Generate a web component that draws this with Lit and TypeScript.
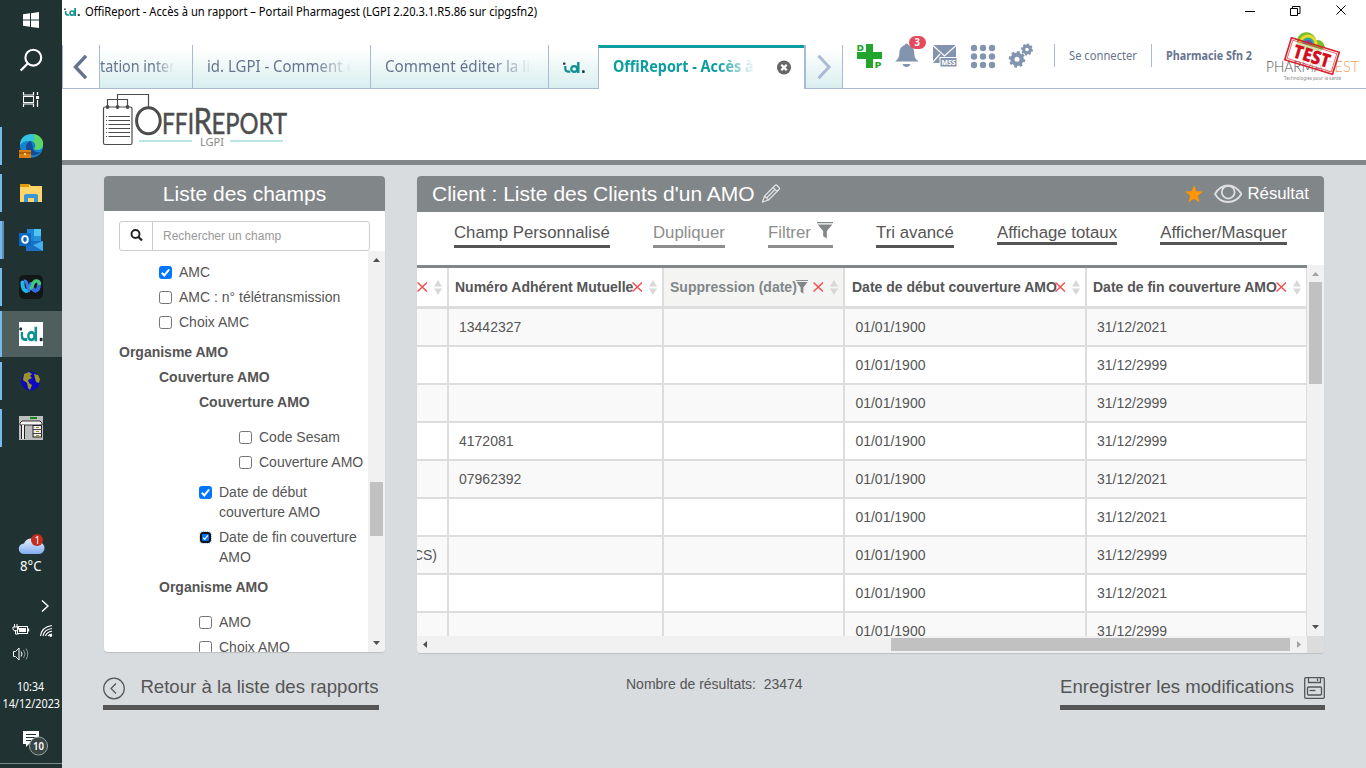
import { LitElement, html, svg, css, nothing } from "lit";
import { customElement, property } from "lit/decorators.js";
import { classMap } from "lit/directives/class-map.js";

const UI = "'Noto Sans', 'Open Sans', sans-serif";

/* One line of text held to a given width. */
const line = (text: string, width: number, size: number, color: string, weight = 400, family = UI) => html`
  <svg width=${width} height=${Math.round(size * 1.5)} style="display:block;flex:none;overflow:visible">
    <text x="0" y=${Math.round(size * 1.1)} font-family=${family} font-size=${size} font-weight=${weight}
      fill=${color} textLength=${width} lengthAdjust="spacingAndGlyphs">${text}</text>
  </svg>`;

/* The "id." mark, 22 by 11. */
const idGlyph = (dot = "#1d3b44") => svg`
  <rect x="0" y=".6" width="2.4" height="2.2" rx=".6" fill=${dot}/>
  <path d="M2.300 4v2.600q0 3 2.600 3h2.500" fill="none" stroke="#0f9192" stroke-width="2.200"/>
  <circle cx="11.200" cy="7" r="2.900" fill="none" stroke="#0f9192" stroke-width="2.200"/>
  <path d="M15.300 0v11" stroke="#0f9192" stroke-width="2.400"/>
  <rect x="19" y="8.300" width="2.700" height="2.700" rx=".8" fill=${dot}/>`;

const gear = (cx: number, cy: number, r: number, teeth: number) => svg`
  <g transform="translate(${cx} ${cy})" fill="#8294ae">
    ${Array.from({ length: teeth }, (_, i) => svg`<rect x=${-r * 0.2} y=${-r * 1.25} width=${r * 0.44} height=${r * 0.6} transform="rotate(${(i * 360) / teeth + 10})"/>`)}
    <circle r=${r * 0.7} fill="none" stroke="#8294ae" stroke-width=${r * 0.64}/>
  </g>`;

const funnel = (w: number, h: number, color: string) => html`
  <svg class="funnel" width=${w} height=${h} viewBox="0 0 14 17" preserveAspectRatio="none">
    <path d="M0 .6h14" stroke=${color} stroke-width="1.1"/><path d="M.6 2.4h12.8L8.6 9v7.6L5.4 14.2V9z" fill=${color}/>
  </svg>`;

@customElement("scroll-bar")
class ScrollBar extends LitElement {
  @property({ type: Boolean, reflect: true }) horizontal = false;
  @property({ type: Number }) before = 0;
  @property({ type: Number }) thumb = 0;
  @property() startColor = "#505050";
  @property() endColor = "#505050";
  static styles = css`
    :host { display: flex; flex-direction: column; width: 17px; background: #f1f1f1; flex: none; }
    :host([horizontal]) { flex-direction: row; width: auto; height: 17px; }
    .btn { width: 17px; height: 17px; flex: none; display: block; }
    .thumb { background: #c1c1c1; flex: none; margin: 0 2px; }
    :host([horizontal]) .thumb { margin: 2px 0; }
    .space { flex: none; }
    .rest { flex: 1; }
  `;
  render() {
    const d = this.horizontal ? "width" : "height";
    const a = this.horizontal ? "M10 5v7l-4-3.5z" : "M5 11h7l-3.5-4z";
    const b = this.horizontal ? "M7 5v7l4-3.5z" : "M5 6h7l-3.5 4z";
    return html`
      <svg class="btn"><path d=${a} fill=${this.startColor}/></svg>
      <div class="space" style="${d}:${this.before}px"></div>
      <div class="thumb" style="${d}:${this.thumb}px"></div>
      <div class="rest"></div>
      <svg class="btn"><path d=${b} fill=${this.endColor}/></svg>`;
  }
}

@customElement("task-bar")
class TaskBar extends LitElement {
  static styles = css`
    :host { display: flex; flex-direction: column; width: 62px; height: 768px; background: #203332; flex: none; }
    svg { display: block; overflow: visible; }
    .top { height: 40px; display: flex; align-items: center; justify-content: center; }
    .apps { margin-top: 3px; }
    .app { height: 47px; display: flex; align-items: flex-start; }
    .mark { width: 2px; height: 38px; margin-top: 4px; background: #76b9ed; }
    .app svg { margin: 11px 0 0 17px; }
    .active { background: #4f5f5e; height: 46px; margin-bottom: 1px; }
    .active .mark { height: 46px; margin-top: 0; }
    .stack .mark { border-right: 2px solid #5b8fb8; }
    .stack svg { margin-left: 15px; }
    .tray { margin-top: 80px; }
  `;
  render() {
    const apps = [
      { c: "", g: svg`<circle cx="12.5" cy="12" r="11.6" fill="#1683d0"/><path d="M1 11C1-3 23-4 24 11c0 5-5 6-9 4 3-3 2-7-3-8-5-.6-9 1-11 4z" fill="#35c1e0"/><path d="M14 0c8 1 11 7 10 11-1 5-6 5-9 4 3-3 1-7-2-8 4-1 3-4 1-7z" fill="#5fd663"/><path d="M12 7c-6 1-7 9-1 13 4 3 9 0 11-2-5 1-9-1-8-5z" fill="#144b96"/><rect x="0" y="16" width="12" height="8" fill="#d98213"/><path d="M0 19h12" stroke="#a14f06" stroke-width="1.4"/><rect x="5" y="19" width="2" height="2" fill="#ffd94a"/>` },
      { c: "", g: svg`<path d="M1 3h9l2 2h11v16H1z" fill="#ffd667"/><path d="M1 3h9v3H1z" fill="#e39a0b"/><path d="M5 21v-6q0-2 2-2h10q2 0 2 2v6h-4v-4H9v4z" fill="#3996dc"/>` },
      { c: "stack", g: svg`<rect x="8" y="1" width="14" height="14" fill="#1e86d8"/><path d="M15 1h7v7h-7z" fill="#52c3f7"/><path d="M15 8h7v6h-7z" fill="#2292df"/><path d="M7 13h17v10H7z" fill="#1a71c4"/><path d="M24 13v10L14 17z" fill="#45aef0"/><rect y="5" width="12" height="13" fill="#0b69c2"/><ellipse cx="6" cy="11.5" rx="2.8" ry="3.4" fill="none" stroke="#fff" stroke-width="1.9"/>` },
      { c: "", g: svg`<rect width="24" height="24" rx="5" fill="#121718"/><path d="M3.500 7.500c0 9 5 12 8.500 3" fill="none" stroke="#20b8e8" stroke-width="4" stroke-linecap="round"/><path d="M12 9c2 10 8 8 8-1" fill="none" stroke="#356de2" stroke-width="4" stroke-linecap="round"/><path d="M12 13c2-1 1-8 6-7 1.500 0 2 1 2.500 2.500" fill="none" stroke="#42c77b" stroke-width="3.400" stroke-linecap="round"/><path d="M5 6c4-1 3 9 6 10" fill="none" stroke="#3b7af1" stroke-width="3"/>` },
      { c: "active", g: svg`<rect width="24" height="24" fill="#fff"/><g transform="translate(.4 4.800) scale(1.070 1.320)">${idGlyph("#1b2a33")}</g>` },
      { c: "", g: svg`<circle cx="11.5" cy="12" r="9.6" fill="#0b0bc4"/><path d="M5 5l5-2 3 2-2 2 2 2-4 2 1 3 3 2-2 5-2-2-1-5-4-3z M15 5l4 1 2 4-1 4-3-1-1-4z" fill="#9b9520"/>` },
      { c: "", g: svg`<rect width="24" height="24" fill="#bdbdbd"/><rect x="11" y="1" width="7" height="2" fill="#0e8a1d"/><path d="M1 7l2-2h18l2 2v2H1z" fill="#f4f4f4" stroke="#222" stroke-width=".9"/><path d="M2.500 9v14M5.500 9v14" stroke="#222"/><path d="M4 9v14" stroke="#eee" stroke-width="2"/><rect x="14" y="9.500" width="8.500" height="11.500" fill="#eee" stroke="#222"/><path d="M14 13.500h9M14 17.500h9" stroke="#444"/><path d="M17 11.500h3M17 15.500h3M17 19.500h3" stroke="#998b13" stroke-width="1.2"/>` },
    ];
    return html`
      <div class="top"><svg width="16" height="16"><path d="M0 2.300L7 1.300V7.500H0zM8 1.200L16 0v7.500H8zM0 8.500h7v6.300L0 13.800zM8 8.500h8V16l-8-1.100z" fill="#fff"/></svg></div>
      <div class="top"><svg width="22" height="22"><circle cx="13.300" cy="8.700" r="7.900" fill="none" stroke="#fff" stroke-width="2.100"/><path d="M7.700 14.500L.7 21.500" stroke="#fff" stroke-width="2.400"/></svg></div>
      <div class="top"><svg width="16" height="16"><path d="M.5 0v3h10V0M.5 15v-3h10v3M14.500 0v3M14.500 8v7" fill="none" stroke="#fff" stroke-width="1.200"/><rect x=".5" y="4.500" width="10" height="6" fill="none" stroke="#fff"/><rect x="13" y="4" width="3" height="3" fill="#fff"/></svg></div>
      <div class="apps">${apps.map((a) => html`<div class="app ${a.c}"><i class="mark"></i><svg width="24" height="24">${a.g}</svg></div>`)}</div>
      <div class="tray">
        <svg width="62" height="236" viewBox="0 532 62 236" font-family=${UI} fill="#fff">
          <defs><linearGradient id="cl" x2="0" y2="1"><stop stop-color="#e5efff"/><stop offset="1" stop-color="#80aef0"/></linearGradient></defs>
          <path d="M24 554a5 5 0 0 1 0-10.500 8 8 0 0 1 14-1.500 6 6 0 0 1 1 12z" fill="url(#cl)"/>
          <circle cx="37" cy="540" r="6" fill="#c52b1e"/><text x="34.500" y="544" font-size="10">1</text>
          <text x="20" y="571" font-size="13.500" textLength="21.500" lengthAdjust="spacingAndGlyphs">8°C</text>
          <path d="M42 600.500l6 5.500-6 5.500" fill="none" stroke="#fff" stroke-width="1.400"/>
          <rect x="17.500" y="626.500" width="10" height="7" fill="none" stroke="#fff"/><rect x="19" y="628" width="7" height="4"/><rect x="28" y="628.500" width="1.200" height="3"/>
          <path d="M14.500 624v3M17 624v3M13 627h5.500v2q-1 2-3 2t-2.500-2zM15.500 630v4h3" fill="none" stroke="#fff"/>
          <g fill="none" stroke="#fff" stroke-width="1.100"><path d="M40.500 636q1-9 11.500-10.500"/><path d="M43 636q1-6.500 9-7.500"/><path d="M45.500 636q1-4 6.500-4.700"/><path d="M48 636q.7-1.500 4-2"/></g><circle cx="50.700" cy="635.500" r="1.400"/>
          <path d="M13.500 651.500h2l3.500-3.500v12l-3.500-3.500h-2z" fill="none" stroke="#fff"/><path d="M21 651.500q2 2.500 0 5" fill="none" stroke="#fff"/><path d="M23.500 650q3 4 0 8M26 648.500q3.500 5.500 0 11" fill="none" stroke="#8a9897"/>
          <text x="17" y="690.700" font-size="12" textLength="27" lengthAdjust="spacingAndGlyphs">10:34</text>
          <text x="2.500" y="707.700" font-size="12" textLength="57.500" lengthAdjust="spacingAndGlyphs">14/12/2023</text>
          <path d="M23 731h16v13H29l-3 3v-3h-3z"/><path d="M26 734.500h10M26 737.500h10M26 740.500h6" stroke="#203332" stroke-width="1.100"/>
          <circle cx="38.500" cy="746" r="9" fill="#3a4544" stroke="#9aa3a2"/><text x="33" y="750" font-size="11" font-weight="600" textLength="11" lengthAdjust="spacingAndGlyphs">10</text>
          <path d="M0 763.500h62" stroke="#7e8a89"/>
        </svg>
      </div>`;
  }
}

@customElement("portal-header")
class PortalHeader extends LitElement {
  static styles = css`
    :host { display: block; background: #fff; }
    svg { display: block; }
    .title { height: 24px; display: flex; align-items: flex-start; padding-left: 2px; }
    .title .name { margin: 3px 0 0 5px; }
    .title .mark { margin-top: 8px; }
    .spacer { flex: 1; }
    .bar { margin-top: 21px; height: 44px; display: flex; box-shadow: inset 0 -1px #a9b9d6; box-sizing: border-box; }
    .tab { box-sizing: border-box; height: 43px; border-left: 1px solid #a9b9d6; background: linear-gradient(#fff 10%, #d9eeee); display: flex; align-items: center; flex: none; overflow: hidden; }
    .plain { background: #fff; }
    .arrow { width: 37px; justify-content: center; }
    .arrow svg { margin-right: 1px; }
    .fade { -webkit-mask-image: linear-gradient(90deg, #000 72%, transparent 98%); mask-image: linear-gradient(90deg, #000 72%, transparent 98%); overflow: hidden; flex: none; margin-bottom: 2px; }
    .t1 { width: 93px; } .t1 .fade { width: 76px; }
    .t2 { width: 178px; padding-left: 14px; } .t2 .fade { width: 148px; }
    .t3 { width: 178px; padding-left: 14px; } .t3 .fade { width: 150px; }
    .t4 { width: 50px; padding: 2px 0 0 14px; }
    .t5 { width: 206px; height: 44px; background: #fff; border-top: 3px solid #0c9e9f; padding: 0 0 2px 14px; }
    .t5 .fade { width: 146px; margin: 0 18px 3px 0; }
    .t6 { width: 39px; border-left-width: 2px; border-right: 1px solid #a9b9d6; justify-content: center; }
    .icons { margin-left: 14px; flex: none; }
    .sep { width: 1px; height: 23px; background: #a9b9d6; margin-top: -1px; }
    .right { display: flex; align-items: center; padding-bottom: 23px; }
    .right .who { margin-left: 14px; margin-right: 14px; }
    .brand { margin-left: -2px; flex: none; }
    .logo { height: 71px; border-bottom: 5px solid #818689; padding-left: 40px; }
  `;
  render() {
    const c = "#66758f";
    return html`
      <div class="title">
        <svg class="mark" width="16" height="8" viewBox="0 0 22 11">${idGlyph()}</svg>
        <div class="name">${line("OffiReport - Accès à un rapport – Portail Pharmagest (LGPI 2.20.3.1.R5.86 sur cipgsfn2)", 452, 12, "#000")}</div>
        <div class="spacer"></div>
        <svg width="121" height="24" fill="none" stroke="#000"><path d="M0 11.500h10M45.500 8.500h7v7h-7zM47.500 8.500v-2h7.500v7h-2.500M91.500 5.500l9 9m0-9l-9 9"/></svg>
      </div>
      <div class="bar">
        <div class="tab plain arrow"><svg width="15" height="24"><path d="M13 .8L2.500 12 13 23.200" fill="none" stroke=${c} stroke-width="3.400"/></svg></div>
        <div class="tab t1"><div class="fade">${line("tation interne", 92, 16, c)}</div></div>
        <div class="tab t2"><div class="fade">${line("id. LGPI - Comment é", 148, 16, c)}</div></div>
        <div class="tab t3"><div class="fade">${line("Comment éditer la list", 158, 16, c)}</div></div>
        <div class="tab t4"><svg width="22" height="11">${idGlyph()}</svg></div>
        <div class="tab t5"><div class="fade">${line("OffiReport - Accès à un", 163, 16, "#0c9e9f", 700)}</div>
          <svg width="15" height="15"><circle cx="7" cy="7.500" r="7" fill="#666"/><path d="M4.300 4.800l5.400 5.400m0-5.400l-5.400 5.400" stroke="#fff" stroke-width="2.300"/></svg></div>
        <div class="tab t6"><svg width="15" height="24"><path d="M1.500 .8L12 12 1.500 23.200" fill="none" stroke="#a9b9d6" stroke-width="3"/></svg></div>
        <svg class="icons" width="197" height="43" viewBox="857 45 197 43" overflow="visible" font-family=${UI} font-weight="800">
          <path d="M866 44h7v8h9v7h-9v9h-7v-9h-9v-7h9z" fill="#22a52b"/>
          <path d="M856 43.500h9v7.500h-9zM873.500 60.500h8.500v8h-8.500z" fill="#fff"/>
          <text x="856.500" y="50.500" font-size="9" fill="#22a52b" textLength="7.500" lengthAdjust="spacingAndGlyphs">D</text>
          <text x="874.500" y="68" font-size="9" fill="#22a52b" textLength="7" lengthAdjust="spacingAndGlyphs">P</text>
          <path d="M906.500 43.500q1.800 0 1.800 1.500 6 1.500 6 9 0 5 4.500 7.500h-24q4.500-2.500 4.500-7.500 0-7.500 5.500-9 0-1.500 1.700-1.500zM902.500 64h8q-1 3-4 3t-4-3z" fill="#8294ae"/>
          <rect x="909" y="36" width="17" height="13" rx="6.500" fill="#e8485c"/><text x="914.600" y="46" font-size="10" fill="#fff" font-weight="700" textLength="5.500" lengthAdjust="spacingAndGlyphs">3</text>
          <rect x="933" y="45" width="23" height="18" fill="#8294ae"/><path d="M933 45.500l11.500 10.500L956 45.500M933 62l7-8" fill="none" stroke="#fff" stroke-width="1.200"/>
          <rect x="940" y="57.500" width="17" height="9.500" fill="#8294ae" stroke="#fff"/><text x="941.500" y="65.300" font-size="7.500" fill="#fff" textLength="14" lengthAdjust="spacingAndGlyphs">MSS</text>
          ${[0, 1, 2].map((r) => [0, 1, 2].map((k) => svg`<circle cx=${974 + k * 9} cy=${48 + r * 8.5} r="3.200" fill="#8294ae"/>`))}
          ${gear(1017, 59.3, 6.6, 8)}${gear(1027, 49.5, 4.8, 8)}
        </svg>
        <div class="right">
          <i class="sep"></i><div class="who">${line("Se connecter", 68, 12, c)}</div>
          <i class="sep"></i><div class="who">${line("Pharmacie Sfn 2", 86, 12, c, 700)}</div>
        </div>
        <svg class="brand" width="100" height="40" viewBox="1264 45 100 40" overflow="visible">
          <path d="M1298 47a9.500 9.500 0 0 1 17-10l1 3q7-1 9 7l-4 4-23-2z" fill="#76bd2b"/>
          <path d="M1300 43a8 8 0 0 1 16 2" fill="none" stroke="#e8d92b" stroke-width="3"/><path d="M1303 43a5 5 0 0 1 10 2" fill="#6857a5" stroke="#28a5b5" stroke-width="2"/>
          <text x="1266" y="71.500" font-family="Lato, sans-serif" font-weight="300" font-size="16" fill="#555" textLength="57" lengthAdjust="spacingAndGlyphs">PHARMA</text>
          <text x="1324" y="71.500" font-family="Lato, sans-serif" font-weight="300" font-size="16" fill="#f0a060" textLength="35" lengthAdjust="spacingAndGlyphs">GEST</text>
          <text x="1284" y="80" font-family=${UI} font-size="5.500" fill="#888" textLength="57" lengthAdjust="spacingAndGlyphs">Technologies pour la santé</text>
          <g transform="rotate(17 1312 56)"><rect x="1287" y="44.500" width="50" height="23" fill="none" stroke="#dc1f2d" stroke-width="1.600"/><rect x="1289" y="46.500" width="46" height="19" fill="#ffffff99" stroke="#dc1f2d" stroke-width=".6"/>
          <text x="1293" y="62.800" font-family=${UI} font-weight="900" font-size="19" fill="#d3101f" textLength="38" lengthAdjust="spacingAndGlyphs">TEST</text></g>
        </svg>
      </div>
      <div class="logo">
        <svg width="190" height="71" viewBox="102 89 190 71" font-family="Lato, sans-serif" fill="#4d4d4d">
          <g fill="none" stroke="#4d4d4d" stroke-width="1.200"><rect x="103.500" y="107" width="28.500" height="37.500" rx="1.500"/>
          <path d="M107.500 107v-7.500h20v7.500M117.500 107V94.500h31V107"/>
          <path d="M106 116.500h24M106 120.500h24M106 124.500h24M106 128.500h24M106 132.500h24M106 136.500h24" stroke-dasharray="1 1.500 22"/></g>
          <circle cx="107.500" cy="107" r="1.900"/><circle cx="117.500" cy="107" r="1.900"/><circle cx="127.500" cy="107" r="1.900"/>
          <ellipse cx="148.400" cy="120.700" rx="11.800" ry="13" fill="none" stroke="#4d4d4d" stroke-width="3"/>
          <g stroke="#4d4d4d" stroke-width=".5">
          <text x="162" y="134" font-size="29.500" textLength="32" lengthAdjust="spacingAndGlyphs">FFI</text>
          <text x="193.500" y="134" font-size="37.500" textLength="18.500" lengthAdjust="spacingAndGlyphs">R</text>
          <text x="211.500" y="134" font-size="29.500" textLength="75.500" lengthAdjust="spacingAndGlyphs">EPORT</text></g>
          <path d="M139 141h53M230 141h53" stroke="#b9e5e2" stroke-width="2"/>
          <text x="200" y="145.800" font-family=${UI} font-size="11" fill="#888" textLength="24" lengthAdjust="spacingAndGlyphs">LGPI</text>
        </svg>
      </div>`;
  }
}

type Field = { t: string; i: number; g?: number; on?: boolean; head?: boolean; focus?: boolean };

@customElement("field-list")
class FieldList extends LitElement {
  static styles = css`
    :host { display: flex; flex-direction: column; width: 281px; height: 476px; background: #fff; border-radius: 4px; overflow: hidden; box-shadow: 0 1px 1px #0002; color: #555; font: 14px/20px "Liberation Sans", Arial, sans-serif; }
    .head { height: 35px; background: #818689; color: #fff; font-size: 21px; line-height: 36px; text-align: center; flex: none; }
    .search { margin: 10px 15px 0; height: 30px; box-sizing: border-box; border: 1px solid #ccc; border-radius: 3px; display: flex; flex: none; font-size: 12px; line-height: 28px; color: #999; }
    .search svg { width: 32px; border-right: 1px solid #ccc; }
    .search span { padding-left: 10px; }
    .body { flex: 1; min-height: 0; display: flex; }
    .list { flex: 1; overflow: hidden; padding-top: 11px; }
    .item { display: flex; width: max-content; }
    .item b { white-space: nowrap; }
    .text { white-space: pre; }
    .box { width: 13px; height: 13px; margin: 4px 7px 0 0; box-sizing: border-box; border: 1px solid #767676; border-radius: 2.500px; background: #fff; flex: none; }
    .on { background: #0075ff; border-color: #0075ff; }
    .focus { border: 2px solid #101010; border-radius: 3px; width: 11px; height: 11px; margin: 5px 8px 0 1px; outline: 1px dotted #9fc4f0; }
    .box svg { display: block; width: 100%; height: 100%; }
  `;
  private items: Field[] = [
    { t: "AMC", i: 55, g: 0, on: true },
    { t: "AMC : n° télétransmission", i: 55 },
    { t: "Choix AMC", i: 55 },
    { t: "Organisme AMO", i: 15, g: 10, head: true },
    { t: "Couverture AMO", i: 55, head: true },
    { t: "Couverture AMO", i: 95, head: true },
    { t: "Code Sesam", i: 135, g: 15 },
    { t: "Couverture AMO", i: 135 },
    { t: "Date de début\ncouverture AMO", i: 95, g: 10, on: true },
    { t: "Date de fin couverture\nAMO", i: 95, on: true, focus: true },
    { t: "Organisme AMO", i: 55, g: 10, head: true },
    { t: "AMO", i: 95, g: 15 },
    { t: "Choix AMO", i: 95 },
  ];
  render() {
    return html`
      <div class="head">Liste des champs</div>
      <div class="search"><svg height="28"><circle cx="15.500" cy="12" r="4" fill="none" stroke="#222" stroke-width="1.900"/><path d="M18.500 15l3.500 3.500" stroke="#222" stroke-width="2.300"/></svg><span>Rechercher un champ</span></div>
      <div class="body">
        <div class="list">${this.items.map((f) => html`
          <div class="item" style="padding-left:${f.i}px;margin-top:${f.g ?? 5}px">
            ${f.head ? html`<b>${f.t}</b>` : html`<i class=${classMap({ box: true, on: !!f.on, focus: !!f.focus })}>
              ${f.on ? html`<svg viewBox="0 0 11 11"><path d="M1.800 5.800l2.500 2.600L9.200 2.300" fill="none" stroke="#fff" stroke-width="2"/></svg>` : nothing}</i><span class="text">${f.t}</span>`}
          </div>`)}</div>
        <scroll-bar .before=${214} .thumb=${54}></scroll-bar>
      </div>`;
  }
}

@customElement("report-panel")
class ReportPanel extends LitElement {
  static styles = css`
    :host { display: flex; flex-direction: column; width: 907px; height: 477px; background: #fff; border-radius: 4px; overflow: hidden; box-shadow: 0 1px 1px #0002; color: #555; font: 14px/20px "Liberation Sans", Arial, sans-serif; }
    svg { display: block; flex: none; }
    .head { height: 36px; flex: none; background: #818689; color: #fff; display: flex; align-items: center; padding: 0 15px; font-size: 21px; box-sizing: border-box; }
    .head .pen { margin: 0 0 2px 7px; }
    .spacer { flex: 1; }
    .result { font-size: 16.800px; margin-left: 5px; margin-bottom: 1px; }
    .eye { margin-left: 11px; }
    .tools { height: 53px; flex: none; display: flex; align-items: flex-start; gap: 43.200px; padding: 9px 0 0 37px; box-sizing: border-box; font-size: 16.800px; line-height: 24px; white-space: nowrap; }
    .tool { height: 24px; border-bottom: 3px solid #555; display: flex; gap: 6px; }
    .tool .funnel { margin-top: 1px; }
    .short { height: 21px; }
    .off { color: #8d8d8d; border-color: #8d8d8d; }
    .main { flex: 1; min-height: 0; display: flex; }
    .view { width: 890px; display: flex; flex-direction: column; }
    .table { flex: 1; min-height: 0; overflow: hidden; border-top: 3px solid #818689; }
    .row { display: grid; grid-template-columns: 32px 215px 181.400px 241.600px 220px; height: 38px; }
    .cell { border-right: 2px solid #ddd; border-bottom: 2px solid #ddd; padding: 0 10px; line-height: 36px; white-space: nowrap; overflow: hidden; }
    .cell:last-child { border-right-width: 1px; }
    .row:nth-child(even) .cell { background: #f9f9f9; }
    .first { padding-left: 0; display: flex; justify-content: flex-end; }
    .hrow { height: 41px; font-weight: bold; }
    .hcell { border-right: 2px solid #ddd; border-bottom: 3px solid #ddd; display: flex; align-items: center; padding: 0 5px 0 6px; white-space: nowrap; overflow: hidden; }
    .hcell:nth-child(4) { padding-left: 6.600px; }
    .hcell:last-child { border-right-width: 1px; }
    .hcell:first-child { padding-left: 0; }
    .hcell span { flex: 1; min-width: 0; display: flex; align-items: center; }
    .hcell .funnel { margin: 0 0 1px -1px; }
    .sorted { background: #f4f4f2; color: #818689; }
    .x { margin: 0 7px 1px 0; }
    .side { display: flex; flex-direction: column; }
    .side scroll-bar { flex: 1; }
    .corner { height: 17px; background: #dcdcdc; }
  `;
  render() {
    const cols = ["", "Numéro Adhérent Mutuelle", "Suppression (date)", "Date de début couverture AMO", "Date de fin couverture AMO"];
    const nums = ["13442327", "", "", "4172081", "07962392", "", "", "", ""];
    const ends = ["2021", "2999", "2999", "2999", "2021", "2021", "2999", "2021", "2999"];
    return html`
      <div class="head"><span>Client : Liste des Clients d'un AMO</span>
        <svg class="pen" width="19" height="19" fill="none" stroke="#e4e5e6" stroke-width="1.200"><path d="M.5 18l2-6L13 1.500q1-1 2 0l2 2q1 1 0 2L6.500 16zM2.500 12l4 4M11 3.500l4 4M4.500 14l8.500-8.500"/></svg>
        <i class="spacer"></i>
        <svg width="18" height="18"><path d="M9 0l2.400 6.300 6.600.3-5.200 4.200 1.800 6.600L9 13.700l-5.600 3.700 1.800-6.600L0 6.600l6.600-.3z" fill="#ff9500"/></svg>
        <svg class="eye" width="28" height="20" fill="none" stroke="#dedfe0" stroke-width="1.800"><path d="M1 10Q6 1.500 14 1.500T27.500 10q-5 8-13.500 8T1 10z"/><circle cx="14.200" cy="8.200" r="6.400"/></svg>
        <span class="result">Résultat</span>
      </div>
      <div class="tools">
        <div class="tool">Champ Personnalisé</div><div class="tool off">Dupliquer</div>
        <div class="tool off">Filtrer ${funnel(16, 17, "#818689")}</div><div class="tool">Tri avancé</div>
        <div class="tool short">Affichage totaux</div><div class="tool short">Afficher/Masquer</div>
      </div>
      <div class="main">
        <div class="view">
          <div class="table">
            <div class="row hrow">${cols.map((c, i) => html`<div class=${classMap({ hcell: true, sorted: i === 2 })}><span>${c}${i === 2 ? funnel(12, 14, "#818689") : nothing}</span>
              <svg class="x" width="10" height="10"><path d="M.5.5l9.500 9m0-9l-9.500 9" stroke="#f55050" stroke-width="1.500"/></svg>
              <svg width="8" height="15"><path d="M0 6.500h8L4 0zM0 8.500h8L4 15z" fill="#d8d8d8"/></svg></div>`)}</div>
            ${ends.map((e, i) => html`<div class="row">
              <div class="cell first">${i === 6 ? "(CS)" : ""}</div><div class="cell">${nums[i]}</div><div class="cell"></div>
              <div class="cell">01/01/1900</div><div class="cell">31/12/${e}</div></div>`)}
          </div>
          <scroll-bar horizontal .before=${457} .thumb=${399} .endColor=${"#a3a3a3"}></scroll-bar>
        </div>
        <div class="side"><scroll-bar .before=${0} .thumb=${102} .startColor=${"#a3a3a3"}></scroll-bar><div class="corner"></div></div>
      </div>`;
  }
}

@customElement("app-root")
class AppRoot extends LitElement {
  static styles = css`
    :host { display: flex; width: 1366px; height: 768px; overflow: hidden; background: #d8dcdf; color: #555; font: 14px/20px "Liberation Sans", Arial, sans-serif; }
    .page { flex: 1; min-width: 0; }
    .panels { display: flex; align-items: flex-start; gap: 32px; padding: 11px 0 0 42px; }
    .foot { display: grid; grid-template-columns: 276px 1fr 265px; padding: 22px 41px 0 41px; }
    .action { border-bottom: 5px solid #555; height: 30px; display: flex; justify-content: space-between; font-size: 18.640px; line-height: 24px; white-space: nowrap; }
    .action svg { margin-top: 2px; }
    .back { margin-right: .5px; }
    .count { padding-left: 247px; line-height: 18px; white-space: pre; }
  `;
  render() {
    return html`
      <task-bar></task-bar>
      <div class="page">
        <portal-header></portal-header>
        <div class="panels"><field-list></field-list><report-panel></report-panel></div>
        <div class="foot">
          <div class="action"><svg width="22" height="23" fill="none" stroke="#555" stroke-width="1.200"><circle cx="11" cy="11.500" r="10.300"/><path d="M13 6.500l-5 5 5 5"/></svg><span class="back">Retour à la liste des rapports</span></div>
          <div class="count">Nombre de résultats:  23474</div>
          <div class="action"><span>Enregistrer les modifications</span><svg width="21" height="22" fill="none" stroke="#555" stroke-width="1.300"><rect x=".7" y=".7" width="19.600" height="20.600" rx="1"/><path d="M4.500 1v4.500h12V1M13.500 1.500v2.500"/><rect x="3.500" y="10" width="14" height="8" rx="1"/><path d="M5.500 13.500h6"/></svg></div>
        </div>
      </div>`;
  }
}
